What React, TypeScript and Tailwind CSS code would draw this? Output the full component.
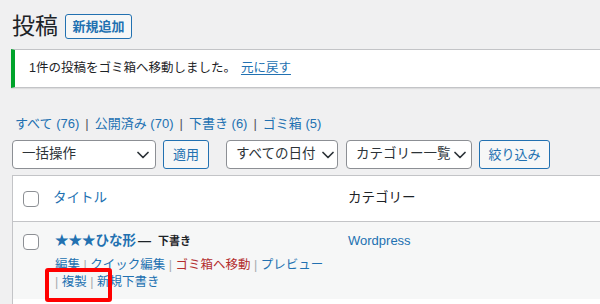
import React from 'react';

const Chevron: React.FC = () => (
  <svg width="12" height="8" viewBox="0 0 12 8" fill="none" className="shrink-0">
    <path d="M1 1.5l5 5 5-5" stroke="#2c3338" strokeWidth="1.7" strokeLinecap="round" strokeLinejoin="round" />
  </svg>
);

const Select: React.FC<{ label: string; width: string; pr: string; extra?: string }> = ({ label, width, pr, extra }) => (
  <div
    className={`${width} ${pr} ${extra ?? ''} h-[29px] flex items-center justify-between pl-[9px] bg-white border border-[#8c8f94] rounded-[4px] text-[13.5px] text-[#2c3338] whitespace-nowrap`}
  >
    <span>{label}</span>
    <Chevron />
  </div>
);

const Sep: React.FC = () => <span className="text-[#a7aaad]"> | </span>;

const Checkbox: React.FC = () => (
  <div className="w-4 h-4 bg-white border border-[#8c8f94] rounded-[4px]" />
);

const App: React.FC = () => {
  const views = [
    { label: 'すべて', count: 76 },
    { label: '公開済み', count: 70 },
    { label: '下書き', count: 6 },
    { label: 'ゴミ箱', count: 5 },
  ];

  return (
    <div className="relative w-[600px] h-[304px] overflow-hidden bg-[#f0f0f1] text-[#1d2327] font-['Liberation_Sans','Noto_Sans_CJK_JP',sans-serif]">
      {/* page header */}
      <div className="flex items-center h-[25px] mt-[14px] pl-3">
        <h1 className="text-[23px] leading-none font-normal">投稿</h1>
        <button className="ml-[7px] h-[25px] w-[67px] bg-[#f6f7f7] border border-[#2271b1] rounded-[3px] text-[13px] font-semibold text-[#2271b1]">
          新規追加
        </button>
      </div>

      {/* notice */}
      <div className="ml-[11px] mt-[10px] w-[620px] h-[39px] flex items-center pl-[14px] bg-white border border-[#c3c4c7] border-l-4 border-l-[#00a32a] shadow-[0_1px_1px_rgba(0,0,0,0.08)] text-[12.5px]">
        <span>1件の投稿をゴミ箱へ移動しました。</span>
        <span className="ml-[5px] text-[#2271b1] underline underline-offset-2">元に戻す</span>
      </div>

      {/* views */}
      <div className="mt-[27px] pl-[15px] h-[18px] flex items-center text-[13px] text-[#2271b1] whitespace-nowrap">
        {views.map((v, i) => (
          <React.Fragment key={v.label}>
            {i > 0 && <span className="px-[6px] text-[#50575e]">|</span>}
            <span>
              {v.label} ({v.count})
            </span>
          </React.Fragment>
        ))}
      </div>

      {/* filters */}
      <div className="mt-[7px] pl-3 flex items-center">
        <Select label="一括操作" width="w-[144px]" pr="pr-[6px]" />
        <button className="ml-[7px] h-[29px] w-[46px] bg-[#f6f7f7] border border-[#2271b1] rounded-[3px] text-[13px] text-[#2271b1]">
          適用
        </button>
        <Select label="すべての日付" width="w-[112px]" pr="pr-[3px]" extra="ml-[17px]" />
        <Select label="カテゴリー一覧" width="w-[126px]" pr="pr-[5px]" extra="ml-[8px]" />
        <button className="ml-[7px] h-[29px] w-[71px] bg-[#f6f7f7] border border-[#2271b1] rounded-[3px] text-[13px] text-[#2271b1]">
          絞り込み
        </button>
      </div>

      {/* posts table */}
      <div className="ml-3 mt-[6px] w-[620px] bg-white border border-[#c3c4c7]">
        <div className="h-[46px] flex items-center border-b border-[#c3c4c7] text-[13.5px]">
          <div className="w-[32px] pl-[10px]">
            <Checkbox />
          </div>
          <div className="w-[293px] pl-[8px] text-[#2271b1]">タイトル</div>
          <div className="pl-[10px]">カテゴリー</div>
        </div>

        <div className="h-[77px] flex items-start bg-[#f6f7f7]">
          <div className="w-[32px] pl-[10px] pt-[12px]">
            <Checkbox />
          </div>
          <div className="w-[293px] pl-[10px] pt-[9px]">
            <div className="h-[20px] flex items-center whitespace-nowrap">
              <span className="text-[13.5px] font-bold text-[#2271b1]">★★★ひな形</span>
              <span className="ml-[2px] text-[13px] font-bold">—</span>
              <span className="ml-[7px] text-[11px] font-bold">下書き</span>
            </div>
            <div className="mt-[6px] text-[12.5px] leading-[17px] text-[#2271b1] whitespace-nowrap">
              <div>
                編集<Sep />クイック編集<Sep />
                <span className="text-[#b32d2e]">ゴミ箱へ移動</span>
                <Sep />プレビュー
              </div>
              <div>
                <span className="text-[#a7aaad]">| </span>複製<Sep />新規下書き
              </div>
            </div>
          </div>
          <div className="pl-[10px] pt-[9px] leading-[20px] text-[13px] text-[#2271b1]">Wordpress</div>
        </div>
        <div className="h-[20px] bg-white" />
      </div>

      {/* highlight annotation */}
      <div className="absolute left-[45px] top-[268px] w-[67px] h-[34px] border-4 border-[#ff0000] rounded-[3px]" />
    </div>
  );
};

export default App;
